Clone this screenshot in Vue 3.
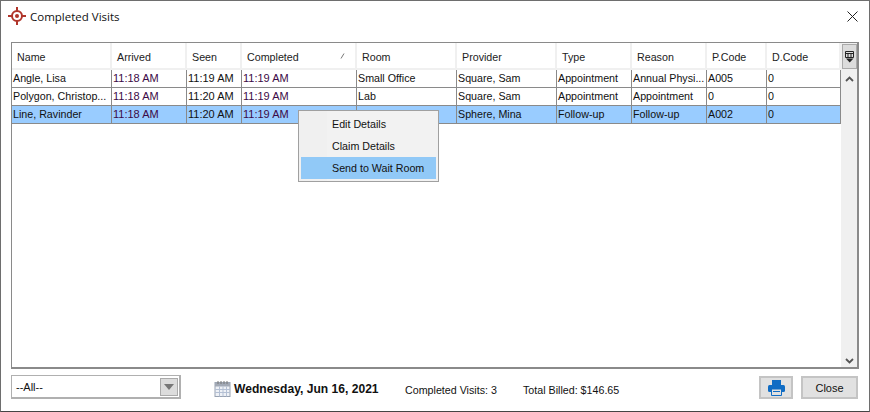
<script setup>
const columns = [
  { label: 'Name' }, { label: 'Arrived' }, { label: 'Seen' }, { label: 'Completed', sort: true },
  { label: 'Room' }, { label: 'Provider' }, { label: 'Type' }, { label: 'Reason' }, { label: 'P.Code' }, { label: 'D.Code' }
]
const rows = [
  { cells: ['Angle, Lisa', '11:18 AM', '11:19 AM', '11:19 AM', 'Small Office', 'Square, Sam', 'Appointment', 'Annual Physi...', 'A005', '0'] },
  { cells: ['Polygon, Christop...', '11:18 AM', '11:20 AM', '11:19 AM', 'Lab', 'Square, Sam', 'Appointment', 'Appointment', '0', '0'] },
  { cells: ['Line, Ravinder', '11:18 AM', '11:20 AM', '11:19 AM', '', 'Sphere, Mina', 'Follow-up', 'Follow-up', 'A002', '0'], selected: true }
]
const menu = [{ label: 'Edit Details' }, { label: 'Claim Details' }, { label: 'Send to Wait Room', active: true }]
</script>

<template>
  <div class="window">
    <header class="titlebar">
      <svg class="logo" width="18" height="18" viewBox="0 0 18 18">
        <circle cx="9" cy="9" r="5" fill="none" stroke="#b0352a" stroke-width="2" />
        <circle cx="9" cy="9" r="2" fill="#b0352a" />
        <path d="M9 0v4M9 14v4M0 9h4M14 9h4" stroke="#b0352a" stroke-width="2" />
      </svg>
      <span class="title">Completed Visits</span>
      <svg class="close-x" width="11" height="11" viewBox="0 0 11 11">
        <path d="M.5.5l10 10M10.5.5l-10 10" stroke="#222" stroke-width="1" fill="none" />
      </svg>
    </header>

    <section class="frame">
      <div class="main">
        <div class="grid head">
          <div v-for="c in columns" :key="c.label" class="hcell">
            {{ c.label }}
            <svg v-if="c.sort" class="sort" width="5" height="6" viewBox="0 0 5 6"><path d="M1 5.500L4 .5" stroke="#777" fill="none" /></svg>
          </div>
        </div>
        <div v-for="(r, i) in rows" :key="i" class="grid row" :class="{ selected: r.selected }">
          <div v-for="(t, j) in r.cells" :key="j" class="cell" :class="{ purple: j === 1 || j === 3 }">{{ t }}</div>
        </div>
      </div>
      <aside class="scroll">
        <div class="colbtn">
          <svg width="11" height="13" viewBox="0 0 11 13">
            <path d="M1.500 1.500h8v6h-8zM1.500 3.500h8M4 3.500v4M7 3.500v4" fill="none" stroke="#222" />
            <path d="M2 8.500h7.500L5.700 12.500z" fill="#222" />
          </svg>
        </div>
        <svg class="arrow" width="9" height="6" viewBox="0 0 9 6"><path d="M1 5l3.500-3.500L8 5" fill="none" stroke="#555" stroke-width="1.800" /></svg>
        <svg class="arrow down" width="9" height="6" viewBox="0 0 9 6"><path d="M1 1l3.500 3.500L8 1" fill="none" stroke="#555" stroke-width="1.800" /></svg>
      </aside>
    </section>

    <ul class="menu">
      <li v-for="m in menu" :key="m.label" :class="{ active: m.active }">{{ m.label }}</li>
    </ul>

    <footer class="footer">
      <div class="combo">
        <span>--All--</span>
        <div class="combo-btn"><svg width="10" height="6" viewBox="0 0 10 6"><path d="M0 0h10L5 6z" fill="#777" /></svg></div>
      </div>
      <svg class="cal" width="17" height="17" viewBox="0 0 17 17">
        <rect x="1" y="2.500" width="15" height="14" fill="#eef1f6" stroke="#98a2b2" />
        <rect x="1" y="2.500" width="15" height="4" fill="#a2a9b5" />
        <path d="M1 9.500h15M1 12.500h15M5.500 6.500v10M9 6.500v10M12.500 6.500v10" stroke="#b4c0d4" stroke-width="1" fill="none" />
        <path d="M4 1v3M7 1v3M10 1v3M13 1v3" stroke="#777" stroke-width="1" />
      </svg>
      <strong class="date">Wednesday, Jun 16, 2021</strong>
      <span class="visits">Completed Visits: 3</span>
      <span class="billed">Total Billed: $146.65</span>
      <button class="btn print">
        <svg width="17" height="16" viewBox="0 0 17 16">
          <path d="M4 0h9v5H4z" fill="#0f6cc4" />
          <rect x="0" y="5" width="17" height="7" rx="1.500" fill="#0f6cc4" />
          <path d="M3.500 9h10v6.500h-10z" fill="#e0e0e0" stroke="#0f6cc4" />
          <path d="M5 11.500h7" stroke="#0f6cc4" />
        </svg>
      </button>
      <button class="btn close">Close</button>
    </footer>
  </div>
</template>

<style>
html, body { margin: 0; background: #fff; }
</style>

<style scoped>
.window {
  position: relative;
  box-sizing: border-box;
  width: 870px;
  height: 412px;
  display: flex;
  flex-direction: column;
  background: #fff;
  border: 1px solid #6e6e6e;
  border-bottom: 1px solid #444;
  font-family: "Liberation Sans", Arial, sans-serif;
  font-size: 10.700px;
  color: #111;
  overflow: hidden;
}
.titlebar {
  height: 41px;
  flex: none;
  display: flex;
  align-items: center;
  padding: 0 11px 11px 7px;
  box-sizing: border-box;
}
.logo { flex: none; }
.title {
  margin-left: 4px;
  font-family: "Open Sans", sans-serif;
  font-size: 11.500px;
  color: #111;
}
.close-x { margin-left: auto; }
.frame {
  width: 848px;
  height: 327px;
  box-sizing: border-box;
  margin-left: 10px;
  border: 1px solid #8a8a8a;
  border-width: 1px 2px 2px 1px;
  display: flex;
  flex: none;
}
.main { width: 829px; flex: none; }
.grid {
  display: grid;
  grid-template-columns: 100px 75px 55px 115px 100px 100px 75px 75px 60px 74px;
}
.head { height: 27px; }
.hcell {
  position: relative;
  display: flex;
  align-items: center;
  padding: 2px 0 0 5px;
  box-sizing: border-box;
  border-right: 2px solid #f0f0f0;
  border-bottom: 2px solid #f0f0f0;
  color: #222;
  overflow: hidden;
  white-space: nowrap;
}
.sort { position: absolute; right: 10px; top: 10px; }
.row {
  height: 18px;
  border-bottom: 1px solid #8a8a8a;
  box-sizing: border-box;
}
.row .cell {
  padding-left: 1px;
  line-height: 17px;
  white-space: nowrap;
  overflow: hidden;
  border-right: 1px solid #8a8a8a;
  box-sizing: border-box;
}
.row .purple, .row .cell:nth-child(3) { font-size: 11px; }
.row.selected { background: #99ccff; }
.row .purple { color: #3c0a46; }
.scroll {
  position: relative;
  width: 16px;
  flex: none;
  background: #f0f0f0;
}
.colbtn {
  width: 15px;
  height: 25px;
  margin: 1px 0 0 1px;
  background: #dcdcdc;
  border: 1px solid #aaa;
  box-sizing: border-box;
  display: flex;
  align-items: center;
  justify-content: center;
}
.arrow { position: absolute; left: 4px; top: 33px; }
.arrow.down { top: auto; bottom: 3px; }
.menu {
  position: absolute;
  left: 297px;
  top: 109px;
  width: 141px;
  height: 72px;
  box-sizing: border-box;
  margin: 0;
  padding: 2px;
  list-style: none;
  background: linear-gradient(to right, #f0f0f0 28px, #f2f2f2 28px);
  border: 1px solid #a0a0a0;
  color: #111;
}
.menu li {
  height: 22px;
  line-height: 22px;
  padding-left: 31px;
}
.menu li.active { background: #91c9f7; }
.footer {
  flex: 1;
  display: flex;
  align-items: flex-start;
  padding: 6px 0 0 10px;
  box-sizing: border-box;
}
.combo {
  width: 170px;
  height: 24px;
  box-sizing: border-box;
  border: 1px solid #b0b0b0;
  border-width: 1px 2px 2px 1px;
  display: flex;
  align-items: center;
  justify-content: space-between;
  padding-left: 4px;
  font-size: 11px;
  background: #fff;
}
.combo-btn {
  width: 18px;
  height: 18px;
  margin-right: 1px;
  background: #dcdcdc;
  border: 1px solid #aaa;
  box-sizing: border-box;
  display: flex;
  align-items: center;
  justify-content: center;
}
.cal { margin: 5px 0 0 33px; flex: none; }
.date {
  margin: 7px 0 0 3px;
  font-size: 12.080px;
  width: 171px;
  white-space: nowrap;
}
.visits { margin-top: 9px; width: 118px; white-space: nowrap; }
.billed { margin-top: 9px; width: 236px; white-space: nowrap; }
.btn {
  height: 23px;
  margin-top: 1px;
  background: #e1e1e1;
  border: 2px solid #c4c4c4;
  box-sizing: border-box;
  padding: 0;
  font-family: inherit;
  font-size: 11px;
  color: #111;
  display: flex;
  align-items: center;
  justify-content: center;
}
.print { width: 34px; margin-right: 8px; }
.close { width: 57px; }
</style>
